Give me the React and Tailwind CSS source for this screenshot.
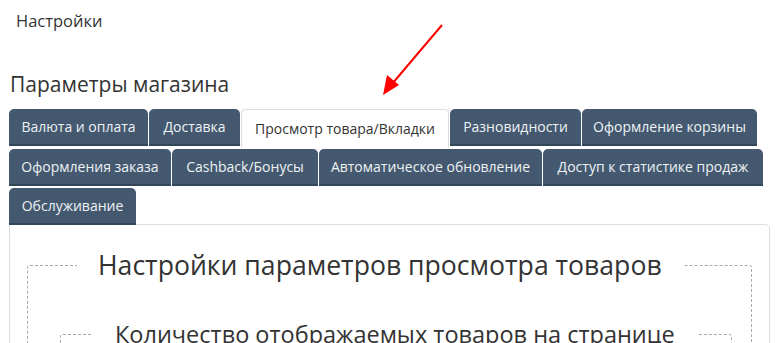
import React from 'react';

const rows = [
    [
        ['Валюта и оплата', 'w-[139px]'],
        ['Доставка', 'w-[91px]'],
        ['Просмотр товара/Вкладки', 'w-[208px]'],
        ['Разновидности', 'w-[131px]'],
        ['Оформление корзины', 'w-[175px]'],
    ],
    [
        ['Оформления заказа', 'w-[162px]'],
        ['Cashback/Бонусы', 'w-[146px]'],
        ['Автоматическое обновление', 'w-[223px]'],
        ['Доступ к статистике продаж', 'w-[220px]'],
    ],
    [['Обслуживание', 'w-[127px]']],
];

const active = 'Просмотр товара/Вкладки';

function Tab({ label, width }) {
    if (label === active) {
        return (
            <div className={`${width} h-[38px] shrink-0 flex items-center justify-center mr-[1px] bg-white border border-b-0 border-[#ddd] rounded-t-[4px] text-[14px] text-[#333] whitespace-nowrap`}>
                {label}
            </div>
        );
    }
    return (
        <div className={`${width} h-[37px] shrink-0 flex items-center justify-center mr-[1px] bg-[#44596f] border-b-2 border-[#33475a] rounded-t-[5px] text-[14px] text-[#eef2f5] whitespace-nowrap`}>
            {label}
        </div>
    );
}

export default function App() {
    return (
        <div className="relative w-[782px] h-[343px] overflow-hidden bg-white text-[#333]" style={{ fontFamily: '"Open Sans", "Noto Sans", sans-serif' }}>
            <div className="pl-[16px] pt-[9px] text-[16.5px] leading-[24px]">Настройки</div>

            <h1 className="pl-[10px] mt-[36px] text-[21px] leading-[30px]">Параметры магазина</h1>

            <div className="pl-[9px] mt-[10px] flex flex-col gap-[2px]">
                {rows.map((row, i) => (
                    <div key={i} className="flex items-start">
                        {row.map(([t, w]) => (
                            <Tab key={t} label={t} width={w} />
                        ))}
                    </div>
                ))}
            </div>

            <div className="ml-[9px] w-[761px] -mt-[1px] border border-[#ddd] rounded-tr-[5px] px-[17px] pt-[20px] h-[200px]">
                <fieldset className="border border-dashed border-[#aaa] rounded-[3px] h-[200px]">
                    <legend className="ml-[49px] px-[21px] text-[26.6px] leading-[40px] whitespace-nowrap">
                        Настройки параметров просмотра товаров
                    </legend>
                    <fieldset className="ml-[32px] mr-[19px] mt-[31px] border border-dashed border-[#aaa] rounded-[3px] h-[100px]">
                        <legend className="ml-[32px] px-[22px] text-[23.5px] leading-[36px] whitespace-nowrap">
                            Количество отображаемых товаров на странице
                        </legend>
                    </fieldset>
                </fieldset>
            </div>

            <svg className="absolute left-0 top-0 pointer-events-none" width="782" height="343">
                <line x1="442" y1="25" x2="392" y2="84" stroke="#f00" strokeWidth="2" />
                <polygon points="383,95 387,75 399,85" fill="#f00" />
            </svg>
        </div>
    );
}
